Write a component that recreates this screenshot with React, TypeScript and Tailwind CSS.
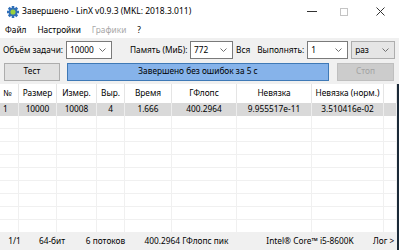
import React from 'react';

const font = { fontFamily: '"Noto Sans", "Open Sans", sans-serif' };

const Chevron = () => (
  <svg width="7" height="4" viewBox="0 0 7 4" className="shrink-0">
    <path d="M0.5 0.5 L3.5 3.5 L6.5 0.5" fill="none" stroke="#707070" strokeWidth="1" />
  </svg>
);

const Combo: React.FC<{ value: string; className: string; gray?: boolean }> = ({ value, className, gray }) => (
  <div
    className={
      'h-[18px] flex items-center justify-between pl-[3px] pr-[5px] border ' +
      (gray ? 'bg-[#e5e5e5] border-[#adadad] ' : 'bg-white border-[#7a7a7a] ') +
      className
    }
  >
    <span>{value}</span>
    <Chevron />
  </div>
);

const GearIcon = () => (
  <svg width="12" height="12" viewBox="0 0 14 14">
    <g fill="#2f6fb8">
      <rect x="5.5" y="0" width="3" height="14" />
      <rect x="0" y="5.5" width="14" height="3" />
      <rect x="5.5" y="0" width="3" height="14" transform="rotate(45 7 7)" />
      <rect x="5.5" y="0" width="3" height="14" transform="rotate(-45 7 7)" />
      <circle cx="7" cy="7" r="5" />
    </g>
    <circle cx="7" cy="7" r="3" fill="#9bd23c" />
  </svg>
);

const cols = [
  { w: 'w-[19px]', h: '№', v: '1' },
  { w: 'w-[38px]', h: 'Размер', v: '10000' },
  { w: 'w-[40px]', h: 'Измер.', v: '10008' },
  { w: 'w-[28px]', h: 'Выр.', v: '4' },
  { w: 'w-[47px]', h: 'Время', v: '1.666' },
  { w: 'w-[65px]', h: 'ГФлопс', v: '400.2964' },
  { w: 'w-[75px]', h: 'Невязка', v: '9.955517e-11' },
  { w: 'w-[72px]', h: 'Невязка (норм.)', v: '3.510416e-02' },
  { w: 'flex-1', h: '', v: '' },
];

export default function App() {
  const emptyRows = Array.from({ length: 9 });
  return (
    <div className="w-[399px] h-[250px] overflow-hidden bg-[#f0f0f0] text-[8.3px] text-black leading-none flex flex-col" style={font}>
      {/* title bar */}
      <div className="h-[23px] bg-white flex items-center shrink-0">
        <div className="pl-[7px] pr-[3px] flex items-center"><GearIcon /></div>
        <span className="text-[8.5px] whitespace-nowrap">Завершено - LinX v0.9.3 (MKL: 2018.3.011)</span>
        <div className="ml-auto flex items-center h-full">
          <div className="w-[30px] h-full flex items-center justify-center">
            <div className="w-[10px] h-px bg-[#333]" />
          </div>
          <div className="w-[34px] h-full flex items-center justify-center">
            <div className="w-[8px] h-[8px] border border-[#c4c4c4]" />
          </div>
          <div className="w-[38px] h-full flex items-center justify-center">
            <svg width="9" height="9" viewBox="0 0 9 9">
              <path d="M0.5 0.5 L8.5 8.5 M8.5 0.5 L0.5 8.5" stroke="#333" strokeWidth="1" />
            </svg>
          </div>
        </div>
      </div>

      {/* menu */}
      <div className="h-[15px] bg-white flex items-center gap-[11px] pl-[5px] text-[8.3px] shrink-0">
        <span>Файл</span>
        <span>Настройки</span>
        <span className="text-[#a8a8a8]">Графики</span>
        <span>?</span>
      </div>

      {/* row 1 */}
      <div className="h-[18px] mt-[3px] flex items-center pl-[3px] whitespace-nowrap shrink-0">
        <span className="w-[60px]">Объём задачи:</span>
        <Combo value="10000" className="ml-[3px] w-[46px]" />
        <span className="ml-[18px] w-[59px]">Память (МиБ):</span>
        <Combo value="772" className="ml-[1px] w-[43px]" />
        <span className="ml-[3px]">Вся</span>
        <span className="ml-[7px] w-[50px]">Выполнять:</span>
        <Combo value="1" className="ml-[0px] w-[41px]" />
        <Combo value="раз" gray className="ml-[3px] w-[44px]" />
      </div>

      {/* row 2 */}
      <div className="h-[19px] mt-[3px] flex items-center pl-[4px] whitespace-nowrap shrink-0">
        <div className="w-[56px] h-[18px] bg-[#e1e1e1] border border-[#adadad] flex items-center justify-center">Тест</div>
        <div className="ml-[7px] w-[262px] h-[18px] bg-[#86b3ea] border border-[#3f79b6] flex items-center justify-center">
          Завершено без ошибок за 5 с
        </div>
        <div className="ml-[8px] w-[57px] h-[18px] bg-[#cccccc] border border-[#bfbfbf] text-[#a3a3a3] flex items-center justify-center">Стоп</div>
      </div>

      <div className="flex-1 flex flex-col mt-[3px] border-r-[2px] border-[#1b2a38]">
        {/* table */}
        <div className="flex-1 bg-white flex flex-col overflow-hidden">
          <div className="h-[19px] flex shrink-0">
            {cols.map((c, i) => (
              <div key={i} className={c.w + ' border-r border-[#e5e5e5] flex items-center whitespace-nowrap ' + (i === 0 ? 'pl-[3px]' : 'justify-center')}>
                {c.h}
              </div>
            ))}
          </div>
          <div className="h-[13px] flex shrink-0 bg-[#d9d9d9]">
            {cols.map((c, i) => (
              <div key={i} className={c.w + ' border-r border-[#ededed] flex items-center whitespace-nowrap ' + (i === 0 ? 'pl-[3px]' : 'justify-center')}>
                {c.v}
              </div>
            ))}
          </div>
          {emptyRows.map((_, r) => (
            <div key={r} className="h-[13px] flex shrink-0 border-b border-[#f0f0f0]">
              {cols.map((c, i) => (
                <div key={i} className={c.w + ' border-r border-[#f0f0f0]'} />
              ))}
            </div>
          ))}
        </div>

        {/* status bar */}
        <div className="h-[17px] flex items-center whitespace-nowrap shrink-0">
          <div className="w-[29px] text-center">1/1</div>
          <div className="w-[46px] text-center">64-бит</div>
          <div className="w-[61px] text-center">6 потоков</div>
          <div className="w-[101px] text-center">400.2964 ГФлопс пик</div>
          <div className="w-[14px]" />
          <div className="w-[118px] text-center">Intel® Core™ i5-8600K</div>
          <div className="flex-1 pl-[4px]">Лог &gt;</div>
        </div>
      </div>
    </div>
  );
}
